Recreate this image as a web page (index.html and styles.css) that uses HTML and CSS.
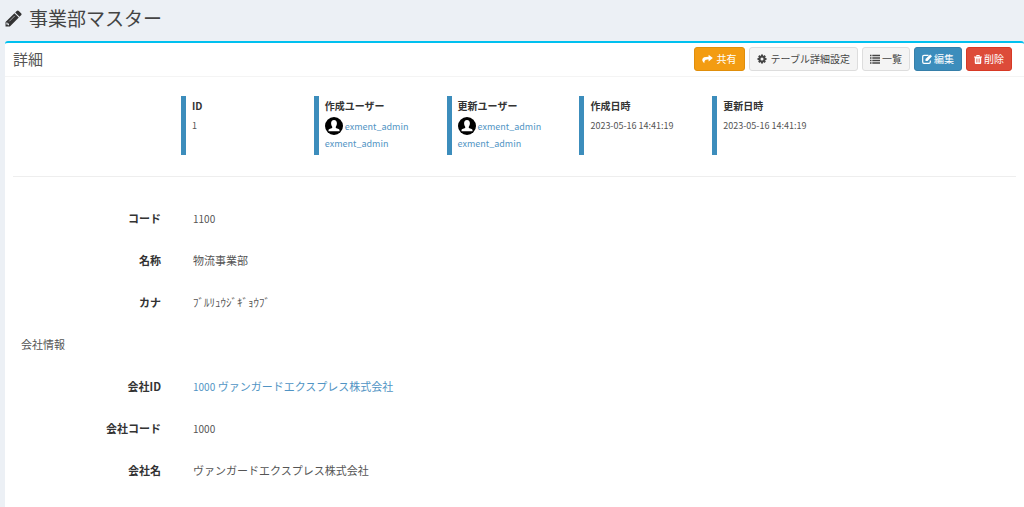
FILE: index.html
```html
<!DOCTYPE html>
<html lang="ja">
<head>
<meta charset="utf-8">
<title>事業部マスター</title>
<link rel="stylesheet" href="styles.css">
</head>
<body>
<svg class="sprite" aria-hidden="true">
  <symbol id="avatar" viewBox="0 0 18 18">
    <circle cx="9" cy="9" r="9" fill="#000"/>
    <path fill="#fff" d="M9 3c2 0 2.900 1.400 2.900 3.300 0 1.500-.5 2.700-1.100 3.400v1.300l2.800.9c.6.2.9.6.9 1.200v1.100h-11v-1.100c0-.6.3-1 .9-1.200l2.800-.9V9.700C6.600 9 6.100 7.800 6.100 6.300 6.100 4.400 7 3 9 3z"/>
  </symbol>
</svg>
<header class="page-header">
  <svg class="pencil" viewBox="0 0 16 16" aria-hidden="true"><path fill="currentColor" d="M11 .9a1.400 1.400 0 0 1 2 0l2.100 2.100a1.400 1.400 0 0 1 0 2l-1.400 1.400L9.600 2.300zM8.900 3l4.100 4.100-8.400 8.400H.5v-4.100z"/><path stroke="#ecf0f5" fill="none" d="M1.800 11.800v1.300h1.400v1.300"/><path stroke="#ecf0f5" stroke-width=".6" d="M4 10.700 9.200 5.500"/></svg>
  <h1>事業部マスター</h1>
</header>
<main class="box">
  <div class="box-header">
    <h2>詳細</h2>
    <div class="tools">
      <button type="button" class="btn warning"><svg class="icon wide" viewBox="0 0 12 10" aria-hidden="true"><path fill="currentColor" d="M7.200.3 11.800 4 7.200 7.700V5.500C4.200 5.400 2.500 6 2.600 9.500.8 8.300.2 6.800.3 5.500.5 3.200 3 2.500 7.200 2.500z"/></svg>共有</button>
      <button type="button" class="btn"><svg class="icon" viewBox="0 0 10 10" aria-hidden="true"><circle cx="5" cy="5" r="2.500" fill="none" stroke="currentColor" stroke-width="2"/><path stroke="currentColor" stroke-width="2" d="M5 .5v2M5 7.500v2M.5 5h2M7.500 5h2M1.800 1.800l1.400 1.400M6.800 6.800l1.400 1.400M1.800 8.200l1.400-1.400M6.800 3.200l1.400-1.400"/></svg>テーブル詳細設定</button>
      <button type="button" class="btn tight"><svg class="icon" viewBox="0 0 10 10" aria-hidden="true"><path stroke="currentColor" stroke-width="1.500" d="M0 1.500h1.500M2.300 1.500H10M0 4h1.500M2.300 4H10M0 6.500h1.500M2.300 6.500H10M0 9h1.500M2.300 9H10"/></svg>一覧</button>
      <button type="button" class="btn primary tight"><svg class="icon" viewBox="0 0 10 10" aria-hidden="true"><path fill="none" stroke="currentColor" stroke-width="1.200" d="M6.500 1.400H2A1.300 1.300 0 0 0 .7 2.700V8A1.300 1.300 0 0 0 2 9.300h5A1.300 1.300 0 0 0 8.300 8V6.500"/><path fill="currentColor" d="M8.200.5 10 2.300 5.600 6.900H3.500V4.900z"/></svg>編集</button>
      <button type="button" class="btn danger tight"><svg class="icon small" viewBox="0 0 8 9" aria-hidden="true"><path fill="none" stroke="currentColor" d="M2.600 1.500V.5h2.800v1"/><path fill="currentColor" d="M0 1.400h8v1.100H0zM.8 2.500h6.400V8a1 1 0 0 1-1 1H1.800a1 1 0 0 1-1-1z"/><path stroke="#dd4b39" stroke-width=".6" d="M2.600 3.500v4M4 3.500v4M5.400 3.500v4"/></svg>削除</button>
    </div>
  </div>
  <div class="box-body">
    <dl class="summary">
      <div><dt>ID</dt><dd>1</dd></div>
      <div><dt>作成ユーザー</dt><dd class="user"><a href="#"><svg class="avatar" aria-hidden="true"><use href="#avatar"/></svg>exment_admin</a><a href="#">exment_admin</a></dd></div>
      <div><dt>更新ユーザー</dt><dd class="user"><a href="#"><svg class="avatar" aria-hidden="true"><use href="#avatar"/></svg>exment_admin</a><a href="#">exment_admin</a></dd></div>
      <div><dt>作成日時</dt><dd>2023-05-16 14:41:19</dd></div>
      <div><dt>更新日時</dt><dd>2023-05-16 14:41:19</dd></div>
    </dl>
    <dl class="fields first">
      <div><dt>コード</dt><dd><span class="num">1100</span></dd></div>
      <div><dt>名称</dt><dd>物流事業部</dd></div>
      <div><dt>カナ</dt><dd>ﾌﾞﾙﾘｭｳｼﾞｷﾞｮｳﾌﾞ</dd></div>
    </dl>
    <h3>会社情報</h3>
    <dl class="fields">
      <div><dt>会社ID</dt><dd><a href="#"><span class="num">1000</span> ヴァンガードエクスプレス株式会社</a></dd></div>
      <div><dt>会社コード</dt><dd><span class="num">1000</span></dd></div>
      <div><dt>会社名</dt><dd>ヴァンガードエクスプレス株式会社</dd></div>
    </dl>
  </div>
</main>
</body>
</html>
```
FILE: styles.css
```css
* { box-sizing: border-box; }
body {
  margin: 0;
  min-height: 100vh;
  display: flex;
  flex-direction: column;
  background: #ecf0f5;
  color: #333;
  font-family: "Noto Sans CJK JP", sans-serif;
  font-size: 11px;
  line-height: 18px;
}
h1, h2, h3, dl, dd { margin: 0; font-weight: 400; }
a { color: #5194c4; text-decoration: none; }
.sprite { position: absolute; width: 0; height: 0; }
.page-header { display: flex; align-items: center; gap: 7px; height: 41px; padding: 0 5px 5px; }
.pencil { width: 17px; height: 17px; }
h1 { font-size: 19px; line-height: 28px; color: #444; }
.box { flex: 1; margin-left: 5px; background: #fff; border-top: 2px solid #00c0ef; border-radius: 3px 3px 0 0; }
.box-header { display: flex; justify-content: space-between; align-items: center; padding: 4px 12px 5px 8px; border-bottom: 1px solid #f4f4f4; }
h2 { font-size: 15px; line-height: 20px; color: #555; }
.tools { display: flex; gap: 4px; }
.btn {
  display: flex;
  align-items: center;
  gap: 4px;
  height: 24px;
  padding: 0 7px;
  border: 1px solid #ddd;
  border-radius: 3px;
  background: #f4f4f4;
  color: #444;
  font: inherit;
  font-size: 10px;
}
.tight { gap: 2px; }
.warning { background: #f39c12; border-color: #e08e0b; color: #fff; }
.primary { background: #3c8dbc; border-color: #367fa9; color: #fff; }
.danger { background: #dd4b39; border-color: #d73925; color: #fff; }
.icon { width: 10px; height: 10px; }
.wide { width: 11px; }
.small { width: 8px; height: 9px; }
.box-body { padding: 0 8px; }
.summary {
  display: grid;
  grid-template-columns: repeat(5, 1fr);
  margin: 19px 0 21px;
  padding: 0 171px 0 168px;
}
.summary > div { min-height: 59px; padding: 1px 0 0 6px; border-left: 5px solid #3c8dbc; }
.summary dt { font-size: 10px; font-weight: 700; }
.summary dd { padding-top: 2px; font-size: 9px; color: #555; }
.user a { display: flex; align-items: center; gap: 2px; line-height: 17px; }
.avatar { width: 18px; height: 18px; }
.fields { color: #555; }
.first { border-top: 1px solid #eee; padding-top: 20px; }
.fields > div { display: grid; grid-template-columns: 148px 1fr; gap: 32px; padding: 12px 0; }
.fields dt { text-align: right; font-weight: 700; color: #333; }
.num { font-size: 10px; line-height: 1; }
h3 { padding: 12px 8px; font-size: 11px; line-height: 18px; color: #555; }
```
